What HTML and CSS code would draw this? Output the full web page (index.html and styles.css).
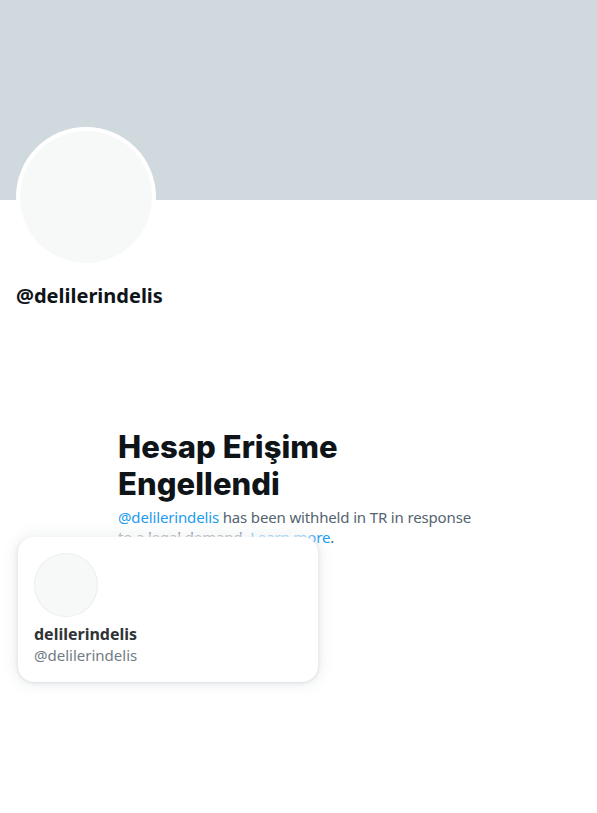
FILE: index.html
```html
<!DOCTYPE html>
<html lang="tr">
<head>
<meta charset="utf-8">
<link rel="stylesheet" href="styles.css">
</head>
<body>
<div class="page">
  <div class="banner"></div>
  <div class="profile">
    <div class="avatar"><div class="avatar-inner"></div></div>
    <div class="handle">@delilerindelis</div>
  </div>
  <div class="empty">
    <h1 class="title">Hesap Erişime Engellendi</h1>
    <p class="desc"><span class="link">@delilerindelis</span> has been withheld in TR in response to a legal demand. <span class="link">Learn more</span>.</p>
  </div>
  <div class="hovercard">
    <div class="hc-avatar"></div>
    <div class="hc-name">delilerindelis</div>
    <div class="hc-handle">@delilerindelis</div>
  </div>
</div>
</body>
</html>
```

FILE: styles.css
```css
html, body {
  margin: 0;
  padding: 0;
  background: #ffffff;
}
body {
  font-family: "Noto Sans", "Open Sans", "Liberation Sans", sans-serif;
  color: #0f1419;
}
.page {
  position: relative;
  width: 597px;
  height: 813px;
  overflow: hidden;
}
.banner {
  height: 200px;
  background: #cfd9de;
}
.profile {
  padding: 0 16px;
}
.avatar {
  width: 140px;
  height: 140px;
  margin-top: -73px;
  border-radius: 50%;
  background: #ffffff;
  padding: 4px;
  box-sizing: border-box;
}
.avatar-inner {
  width: 100%;
  height: 100%;
  border-radius: 50%;
  background: #f7f9f9;
}
.handle {
  margin-top: 17px;
  font-size: 20px;
  font-weight: 700;
  line-height: 24px;
  color: #0f1419;
}
.empty {
  margin: 120px 0 0 118px;
  width: 370px;
}
.title {
  margin: 0;
  font-family: "Inter", "Noto Sans", sans-serif;
  font-size: 31px;
  font-weight: 800;
  line-height: 37px;
  letter-spacing: 0.05px;
  color: #0f1419;
}
.desc {
  margin: 5px 0 0;
  font-size: 15px;
  line-height: 20px;
  letter-spacing: -0.15px;
  color: #536471;
  width: 360px;
}
.link {
  color: #1d9bf0;
}
.hovercard {
  position: absolute;
  left: 18px;
  top: 537px;
  width: 300px;
  height: 145px;
  box-sizing: border-box;
  padding: 16px;
  background: #ffffff;
  border-radius: 16px;
  box-shadow: 0 -5px 6px -1px rgba(255, 255, 255, 0.75), 0 0 15px rgba(101, 119, 134, 0.2), 0 0 3px 1px rgba(101, 119, 134, 0.15);
}
.hc-avatar {
  width: 64px;
  height: 64px;
  border-radius: 50%;
  background: #f7f9f9;
  box-shadow: inset 0 0 0 1px #eceeef;
}
.hc-name {
  margin-top: 7px;
  font-size: 16px;
  font-weight: 700;
  line-height: 20px;
  color: #2f3336;
}
.hc-handle {
  margin-top: 1px;
  font-size: 15px;
  line-height: 20px;
  color: #6f7c86;
}
```
